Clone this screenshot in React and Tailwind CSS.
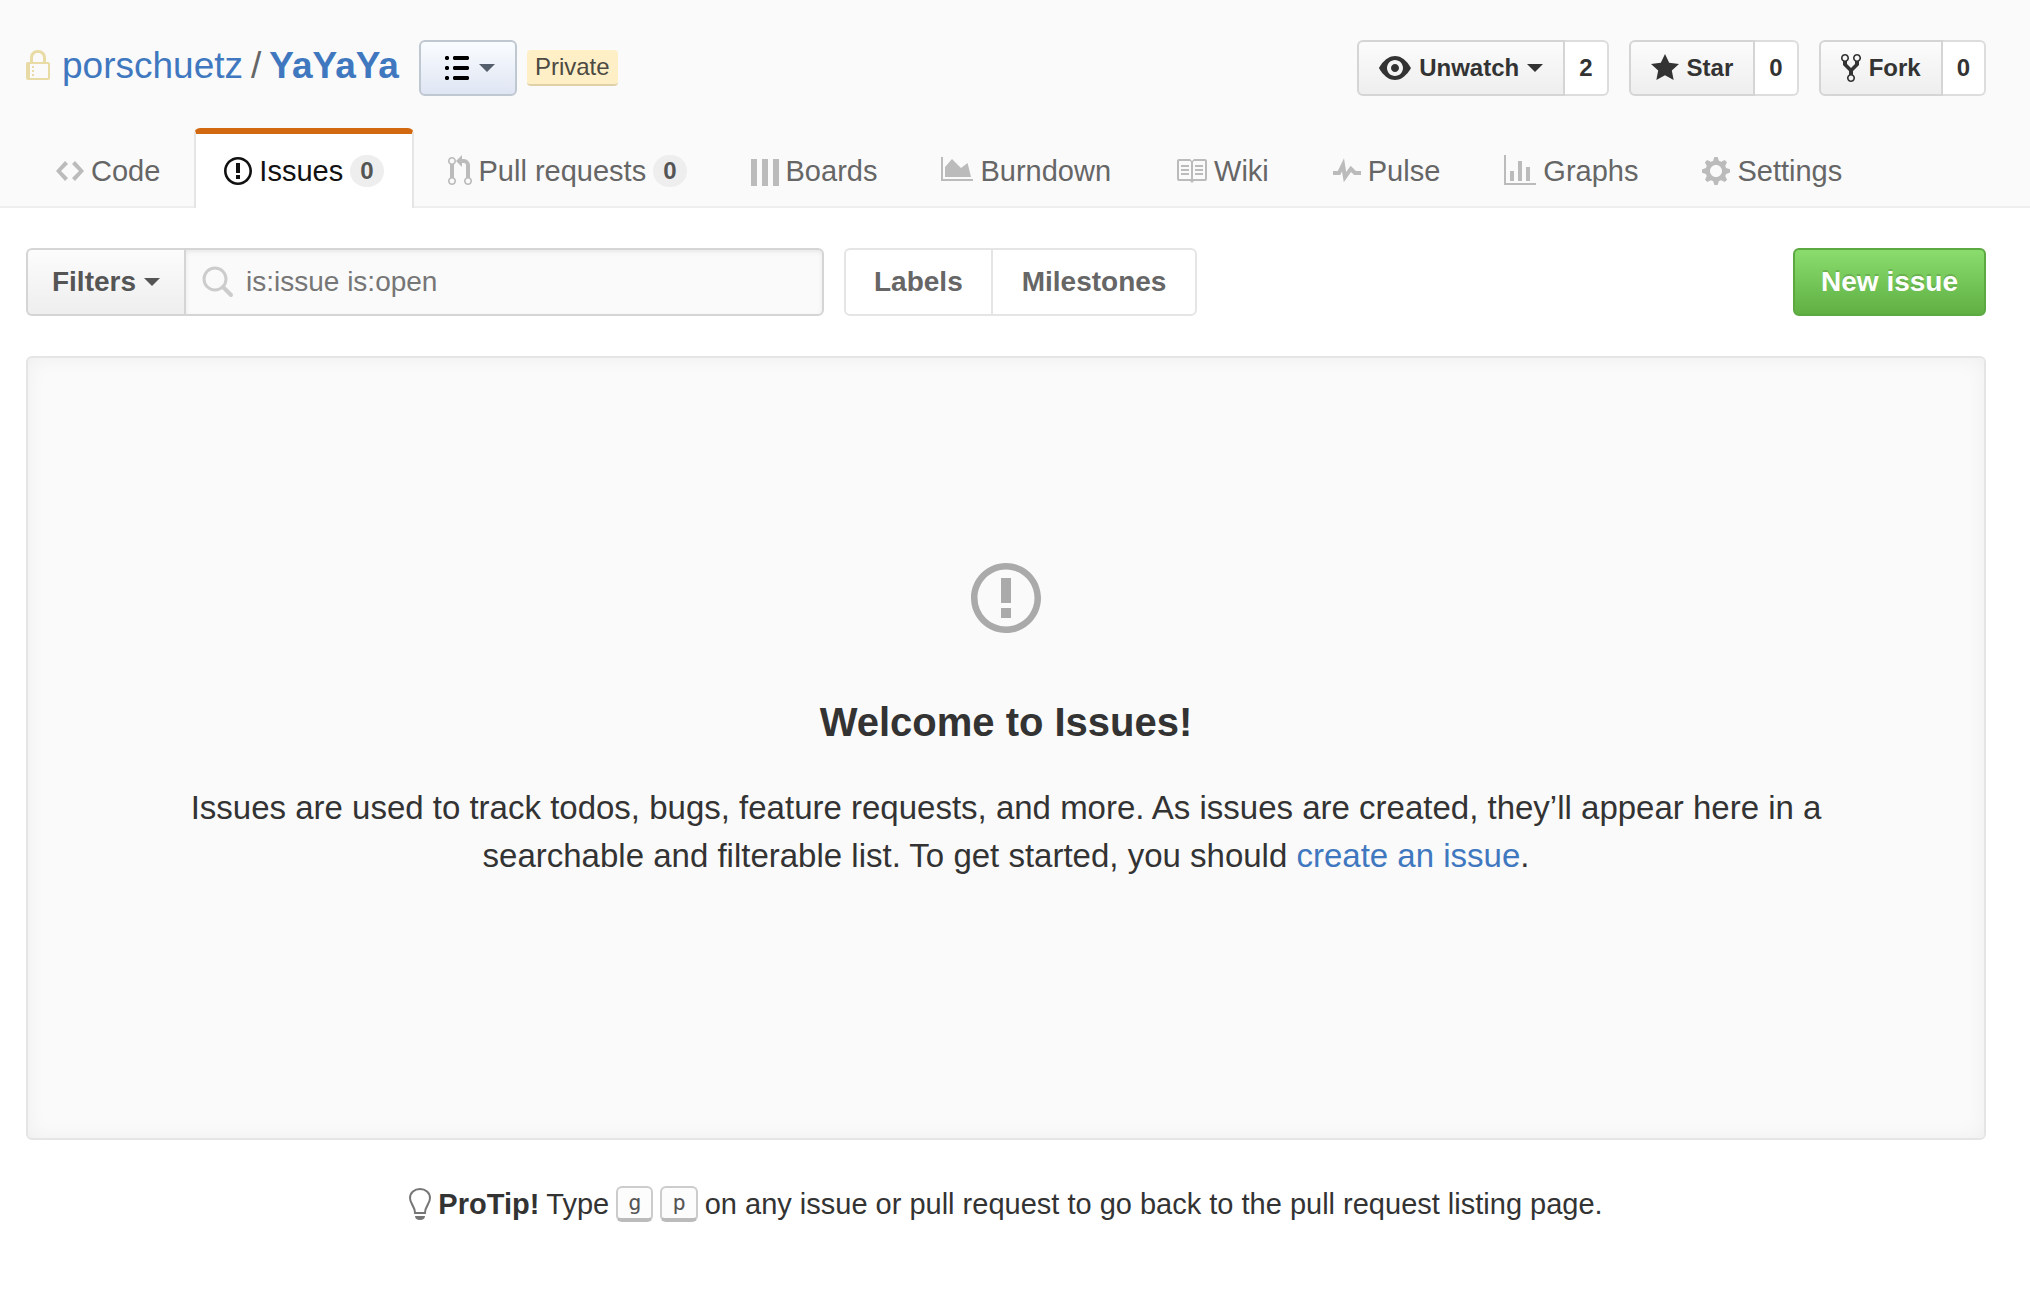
import React from "react";

const ICONS = {
  lock: { w: 12, d: "M1 7h10c.6 0 1 .4 1 1v7c0 .6-.4 1-1 1H1c-.6 0-1-.4-1-1V8c0-.6.4-1 1-1zm1 1v7h9V8H2zM3 9h1v1H3zM3 11h1v1H3zM3 13h1v1H3zM2 7V5c0-2.400 1.600-4 4-4s4 1.600 4 4v2H8.500V5c0-1.500-1-2.500-2.500-2.500S3.500 3.500 3.500 5v2z" },
  code: { w: 14, d: "M9.500 3L8 4.500 11.500 8 8 11.500 9.500 13 14 8 9.500 3zm-5 0L0 8l4.500 5L6 11.500 2.500 8 6 4.500 4.500 3z" },
  issue: { w: 14, d: "M7 2.300c3.140 0 5.700 2.560 5.700 5.700s-2.560 5.700-5.700 5.700A5.710 5.710 0 0 1 1.300 8c0-3.140 2.560-5.700 5.700-5.700zM7 1C3.140 1 0 4.140 0 8s3.140 7 7 7 7-3.140 7-7-3.140-7-7-7zm1 3H6v5h2V4zm0 6H6v2h2v-2z" },
  pull: { w: 12, d: "M11 11.280V5c-.03-.78-.34-1.470-.94-2.060C9.460 2.350 8.780 2.030 8 2H7V0L4 3l3 3V4h1c.27.02.48.11.69.31.21.2.3.42.31.69v6.280A1.993 1.993 0 0 0 10 15a1.993 1.993 0 0 0 1-3.720zm-1 2.920c-.66 0-1.200-.55-1.200-1.200 0-.65.55-1.200 1.200-1.200.65 0 1.200.55 1.200 1.200 0 .65-.55 1.200-1.200 1.200zM4 3c0-1.110-.89-2-2-2a1.993 1.993 0 0 0-1 3.720v6.560A1.993 1.993 0 0 0 2 15a1.993 1.993 0 0 0 1-3.720V4.720c.59-.34 1-.98 1-1.720zm-.8 10c0 .66-.55 1.200-1.200 1.200-.65 0-1.200-.55-1.200-1.200 0-.65.55-1.200 1.200-1.200.65 0 1.200.55 1.200 1.200zM2 4.200C1.340 4.200.8 3.650.8 3c0-.65.55-1.200 1.200-1.200.65 0 1.200.55 1.200 1.200 0 .65-.55 1.200-1.200 1.200z" },
  boards: { w: 14, d: "M0 2h3v13.500H0zM5.500 2h3v13.500h-3zM11 2h3v13.500h-3z" },
  burndown: { w: 16, d: "M0 1h1v11h15v1H0zM2 11V6l3.500-4L10 6.500 13.300 4 15 11z" },
  book: { w: 16, d: "M3 5h4v1H3V5zm0 3h4V7H3v1zm0 2h4V9H3v1zm11-5h-4v1h4V5zm0 2h-4v1h4V7zm0 2h-4v1h4V9zm2-6v9c0 .55-.45 1-1 1H9.500l-1 1-1-1H2c-.55 0-1-.45-1-1V3c0-.55.45-1 1-1h5.500l1 1 1-1H15c.55 0 1 .45 1 1zm-8 .5L7.500 3H2v9h6V3.500zm7-.5H9.500l-.5.5V12h6V3z" },
  pulse: { w: 14, d: "M11.500 8L8.800 5.400 6.600 8.500 5.500 1.600 2.380 8H0v2h3.600l.9-1.800.9 5.400L9 8.500l1.600 1.500H14V8z" },
  graph: { w: 16, d: "M16 14v1H0V0h1v14h15zM5 13H3V8h2v5zm4 0H7V3h2v10zm4 0h-2V6h2v7z" },
  gear: { w: 14, d: "M14 8.770v-1.600l-1.940-.64-.45-1.090.88-1.840-1.130-1.130-1.810.91-1.090-.45-.69-1.920h-1.600l-.63 1.940-1.110.45-1.840-.88-1.130 1.130.91 1.810-.45 1.090L0 7.230v1.590l1.940.64.45 1.090-.88 1.840 1.130 1.130 1.810-.91 1.090.45.69 1.920h1.590l.63-1.940 1.110-.45 1.840.88 1.130-1.130-.92-1.810.47-1.090L14 8.750v.02zM7 11c-1.660 0-3-1.340-3-3s1.340-3 3-3 3 1.340 3 3-1.340 3-3 3z" },
  eye: { w: 16, d: "M8.060 2C3 2 0 8 0 8s3 6 8.060 6C13 14 16 8 16 8s-3-6-7.940-6zM8 12c-2.200 0-4-1.780-4-4 0-2.200 1.800-4 4-4 2.220 0 4 1.800 4 4 0 2.220-1.780 4-4 4zm2-4c0 1.110-.89 2-2 2-1.110 0-2-.89-2-2 0-1.110.89-2 2-2 1.110 0 2 .89 2 2z" },
  star: { w: 14, d: "M14 6l-4.900-.64L7 1 4.900 5.360 0 6l3.600 3.260L2.670 14 7 11.670 11.330 14l-.93-4.740z" },
  fork: { w: 10, d: "M8 1a1.993 1.993 0 0 0-1 3.720V6L5 8 3 6V4.720A1.993 1.993 0 0 0 2 1a1.993 1.993 0 0 0-1 3.720V6.500l3 3v1.780A1.993 1.993 0 0 0 5 15a1.993 1.993 0 0 0 1-3.720V9.500l3-3V4.720A1.993 1.993 0 0 0 8 1zM2 4.200C1.340 4.200.8 3.650.8 3c0-.65.55-1.200 1.200-1.200.65 0 1.200.55 1.200 1.200 0 .65-.55 1.200-1.200 1.200zm3 10c-.66 0-1.200-.55-1.200-1.200 0-.65.55-1.200 1.200-1.200.65 0 1.200.55 1.200 1.200 0 .65-.55 1.200-1.200 1.200zm3-10c-.66 0-1.200-.55-1.200-1.200 0-.65.55-1.200 1.200-1.200.65 0 1.200.55 1.200 1.200 0 .65-.55 1.200-1.200 1.200z" },
  list: { w: 12, d: "M.5 2h1l.5.5v1l-.5.5h-1L0 3.500v-1zM.5 7h1l.5.5v1l-.5.5h-1L0 8.500v-1zM.5 12h1l.5.5v1l-.5.5h-1l-.5-.5v-1zM4.500 2h7l.5.5v1l-.5.5h-7L4 3.500v-1zM4.500 7h7l.5.5v1l-.5.5h-7L4 8.500v-1zM4.500 12h7l.5.5v1l-.5.5h-7l-.5-.5v-1z" },
};

function Icon({ name, scale = 2, className = "" }) {
  const { w, d } = ICONS[name];
  return (
    <svg
      width={w * scale}
      height={16 * scale}
      viewBox={`0 0 ${w} 16`}
      fill="currentColor"
      fillRule="evenodd"
      aria-hidden="true"
      className={`shrink-0 ${className}`}
    >
      <path d={d} />
    </svg>
  );
}

function Caret({ className = "" }) {
  return (
    <svg width="16" height="8" viewBox="0 0 16 8" fill="currentColor" aria-hidden="true" className={`shrink-0 ${className}`}>
      <path d="M0 0h16L8 8z" />
    </svg>
  );
}

const TABS = [
  { icon: "code", label: "Code" },
  { icon: "issue", label: "Issues", count: 0, selected: true },
  { icon: "pull", label: "Pull requests", count: 0 },
  { icon: "boards", label: "Boards" },
  { icon: "burndown", label: "Burndown" },
  { icon: "book", label: "Wiki" },
  { icon: "pulse", label: "Pulse" },
  { icon: "graph", label: "Graphs" },
  { icon: "gear", label: "Settings" },
];

function Tab({ icon, label, count, selected }) {
  return (
    <a
      href="#"
      aria-current={selected ? "page" : undefined}
      className={
        selected
          ? "flex h-20 items-center gap-[7px] rounded-t-md border-x-2 border-t-6 border-x-[#e5e5e5] border-t-[#d26911] bg-white px-7 text-[#111]"
          : "flex h-20 items-center gap-[7px] border-x-2 border-t-6 border-transparent px-7 text-[#666]"
      }
    >
      <Icon name={icon} className={selected ? "text-[#111]" : "text-[#bbb]"} />
      {label}
      {count !== undefined && (
        <span className="rounded-full bg-[#eee] px-2.5 text-2xl leading-8 font-bold text-[#555]">{count}</span>
      )}
    </a>
  );
}

function SocialButton({ icon, label, count, caret }) {
  return (
    <div className="flex h-14 text-2xl font-bold text-[#333]">
      <button
        type="button"
        className="flex items-center gap-2 rounded-l-md border-2 border-[#d5d5d5] bg-linear-to-b from-[#fcfcfc] to-[#eee] px-5"
      >
        <Icon name={icon} />
        {label}
        {caret && <Caret />}
      </button>
      <a href="#" className="flex items-center rounded-r-md border-2 border-l-0 border-[#ddd] bg-white px-3.5">
        {count}
      </a>
    </div>
  );
}

function Key({ children }) {
  return (
    <kbd className="rounded-md border-2 border-b-4 border-[#ccc] border-b-[#bbb] bg-[#fcfcfc] px-2.5 font-['DejaVu_Sans_Mono',monospace] text-[22px] leading-[30px] text-[#555]">
      {children}
    </kbd>
  );
}

export default function App() {
  return (
    <div className="min-h-screen bg-white font-['Liberation_Sans',Arial,sans-serif] text-[28px] leading-10 text-[#333]">
      <header className="border-b-2 border-[#eee] bg-[#fafafa] pt-10">
        <div className="flex items-start justify-between pr-11 pl-[26px]">
          <div className="flex h-14 items-center">
            <div className="flex items-center pb-1">
              <Icon name="lock" className="mb-1 text-[#e9dba5]" />
              <h1 className="ml-3 flex items-center gap-2 text-[37px] leading-[52px] text-[#666]">
                <a href="#" className="text-[#4078c0]">porschuetz</a>
                <span>/</span>
                <a href="#" className="font-bold text-[#4078c0]">YaYaYa</a>
              </h1>
            </div>
            <button
              type="button"
              aria-label="Repository list"
              className="ml-5 flex h-14 items-center gap-2.5 rounded-md border-2 border-[#bfc8d0] bg-linear-to-b from-[#fafdff] to-[#dfe5f3] pr-5 pl-6 text-[#555f6b]"
            >
              <Icon name="list" className="text-black" />
              <Caret />
            </button>
            <span className="ml-2.5 rounded-sm border-b-2 border-[#e0d0a8] bg-[#ffefc6] px-2 text-2xl leading-[34px] text-[#4c4a42]">
              Private
            </span>
          </div>
          <div className="flex gap-5">
            <SocialButton icon="eye" label="Unwatch" count={2} caret />
            <SocialButton icon="star" label="Star" count={0} />
            <SocialButton icon="fork" label="Fork" count={0} />
          </div>
        </div>
        <nav aria-label="Repository" className="mt-8 -mb-0.5 flex gap-1 pl-[26px] text-[29px]">
          {TABS.map((tab) => (
            <Tab key={tab.label} {...tab} />
          ))}
        </nav>
      </header>

      <main className="pt-10 pr-11 pl-[26px]">
        <div className="flex h-[68px] items-stretch">
          <button
            type="button"
            className="flex w-[158px] items-center justify-center gap-2 rounded-l-md border-2 border-r-0 border-[#d5d5d5] bg-linear-to-b from-[#fcfcfc] to-[#eee] font-bold text-[#555]"
          >
            Filters
            <Caret />
          </button>
          <div className="flex w-[640px] items-center gap-3 rounded-r-md border-2 border-[#d5d5d5] bg-[#fafafa] px-4 shadow-[inset_0_2px_4px_rgba(0,0,0,0.075)]">
            <svg width="32" height="32" viewBox="0 0 32 32" fill="none" stroke="#ccc" aria-hidden="true" className="shrink-0">
              <circle cx="13" cy="13" r="11" strokeWidth="3" />
              <path d="M21 21l8 8" strokeWidth="4" strokeLinecap="round" />
            </svg>
            <input
              type="text"
              aria-label="Search all issues"
              defaultValue="is:issue is:open"
              className="w-full min-w-0 bg-transparent text-[#767676] outline-none"
            />
          </div>
          <div className="ml-5 flex rounded-md border-2 border-[#e5e5e5] font-bold text-[#666]">
            <a href="#" className="flex items-center border-r-2 border-[#e5e5e5] px-7">Labels</a>
            <a href="#" className="flex items-center px-[29px]">Milestones</a>
          </div>
          <button
            type="button"
            className="ml-auto rounded-md border-2 border-[#5ca941] bg-linear-to-b from-[#8add6d] to-[#60b044] px-[26px] font-bold text-white text-shadow-[0_-2px_0_rgba(0,0,0,0.15)]"
          >
            New issue
          </button>
        </div>

        <section className="mt-10 flex h-[784px] flex-col items-center rounded-md border-2 border-[#e5e5e5] bg-[#fafafa] px-40 pt-50 text-center shadow-[inset_0_0_20px_rgba(0,0,0,0.05)]">
          <Icon name="issue" scale={5} className="text-[#aaa]" />
          <h2 className="mt-[54px] text-[40px] leading-[60px] font-bold">Welcome to Issues!</h2>
          <p className="mt-8 text-[33px] leading-12">
            Issues are used to track todos, bugs, feature requests, and more. As issues are created, they’ll appear here
            in a searchable and filterable list. To get started, you should{" "}
            <a href="#" className="text-[#4078c0]">create an issue</a>.
          </p>
        </section>

        <p className="mt-11 flex items-center justify-center gap-[7px] text-[29px]">
          <svg width="22" height="32" viewBox="0 0 22 32" fill="none" stroke="#767676" strokeWidth="2" aria-hidden="true" className="shrink-0">
            <path d="M6 25c0-7-5-9-5-15C1 4.500 5.500 1 11 1s10 3.500 10 9c0 6-5 8-5 15z" />
            <path d="M6 28h10c0 2.500-2 4-5 4s-5-1.500-5-4z" fill="#767676" stroke="none" />
          </svg>
          <strong>ProTip!</strong>
          <span>Type</span>
          <Key>g</Key>
          <Key>p</Key>
          <span>on any issue or pull request to go back to the pull request listing page.</span>
        </p>
      </main>
    </div>
  );
}
